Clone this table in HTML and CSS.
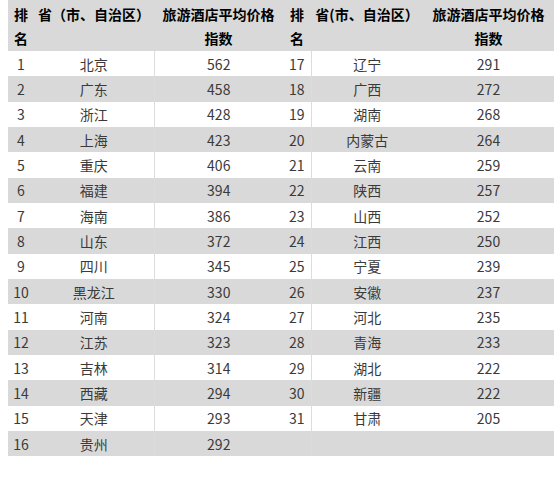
FILE: index.html
```html
<!DOCTYPE html>
<html lang="zh">
<head>
<meta charset="utf-8">
<link rel="stylesheet" href="styles.css">
</head>
<body>
<table class="rank">
<colgroup>
<col class="c-rank"><col class="c-prov"><col class="c-val">
<col class="c-rank2"><col class="c-prov2"><col class="c-val2">
</colgroup>
<thead>
<tr class="head">
<th class="h-rank">排名</th><th>省（市、自治区）</th><th class="h-val">旅游酒店平均价格指数</th>
<th class="h-rank">排名</th><th>省(市、自治区）</th><th class="h-val">旅游酒店平均价格指数</th>
</tr>
</thead>
<tbody>
<tr><td>1</td><td>北京</td><td class="v">562</td><td>17</td><td class="p2">辽宁</td><td>291</td></tr>
<tr><td>2</td><td>广东</td><td class="v">458</td><td>18</td><td class="p2">广西</td><td>272</td></tr>
<tr><td>3</td><td>浙江</td><td class="v">428</td><td>19</td><td class="p2">湖南</td><td>268</td></tr>
<tr><td>4</td><td>上海</td><td class="v">423</td><td>20</td><td class="p2">内蒙古</td><td>264</td></tr>
<tr><td>5</td><td>重庆</td><td class="v">406</td><td>21</td><td class="p2">云南</td><td>259</td></tr>
<tr><td>6</td><td>福建</td><td class="v">394</td><td>22</td><td class="p2">陕西</td><td>257</td></tr>
<tr><td>7</td><td>海南</td><td class="v">386</td><td>23</td><td class="p2">山西</td><td>252</td></tr>
<tr><td>8</td><td>山东</td><td class="v">372</td><td>24</td><td class="p2">江西</td><td>250</td></tr>
<tr><td>9</td><td>四川</td><td class="v">345</td><td>25</td><td class="p2">宁夏</td><td>239</td></tr>
<tr><td>10</td><td>黑龙江</td><td class="v">330</td><td>26</td><td class="p2">安徽</td><td>237</td></tr>
<tr><td>11</td><td>河南</td><td class="v">324</td><td>27</td><td class="p2">河北</td><td>235</td></tr>
<tr><td>12</td><td>江苏</td><td class="v">323</td><td>28</td><td class="p2">青海</td><td>233</td></tr>
<tr><td>13</td><td>吉林</td><td class="v">314</td><td>29</td><td class="p2">湖北</td><td>222</td></tr>
<tr><td>14</td><td>西藏</td><td class="v">294</td><td>30</td><td class="p2">新疆</td><td>222</td></tr>
<tr><td>15</td><td>天津</td><td class="v">293</td><td>31</td><td class="p2">甘肃</td><td>205</td></tr>
<tr><td>16</td><td>贵州</td><td class="v">292</td><td></td><td class="p2"></td><td></td></tr>
</tbody>
</table>
</body>
</html>
```

FILE: styles.css
```css
html, body {
  margin: 0;
  padding: 0;
  background: #ffffff;
}
body {
  padding-left: 8px;
}
.rank {
  border-collapse: collapse;
  table-layout: fixed;
  width: 546px;
  font-family: "Noto Sans CJK SC", "Microsoft YaHei", sans-serif;
  font-size: 14px;
  color: #3a3a3a;
}
.c-rank { width: 26px; }
.c-prov { width: 120px; }
.c-val { width: 129px; }
.c-rank2 { width: 28px; }
.c-prov2 { width: 112px; }
.c-val2 { width: 131px; }

.rank th {
  background: #d9d9d9;
  color: #000000;
  font-weight: 700;
  line-height: 24px;
  padding: 2px 0 1px;
  text-align: center;
  vertical-align: top;
  height: 48px;
}
.rank th.h-rank {
  padding-left: 1px;
  padding-right: 1px;
}
.rank th.h-val {
  padding-left: 8px;
  padding-right: 8px;
}
.rank td {
  height: 25.33px;
  padding: 0;
  line-height: 20px;
  text-align: center;
  vertical-align: middle;
  font-weight: 400;
}
.rank tbody tr:nth-child(even) td {
  background: #d9d9d9;
}
.rank td.v,
.rank td.p2 {
  border-left: 1px solid #dcdcdc;
}
```
